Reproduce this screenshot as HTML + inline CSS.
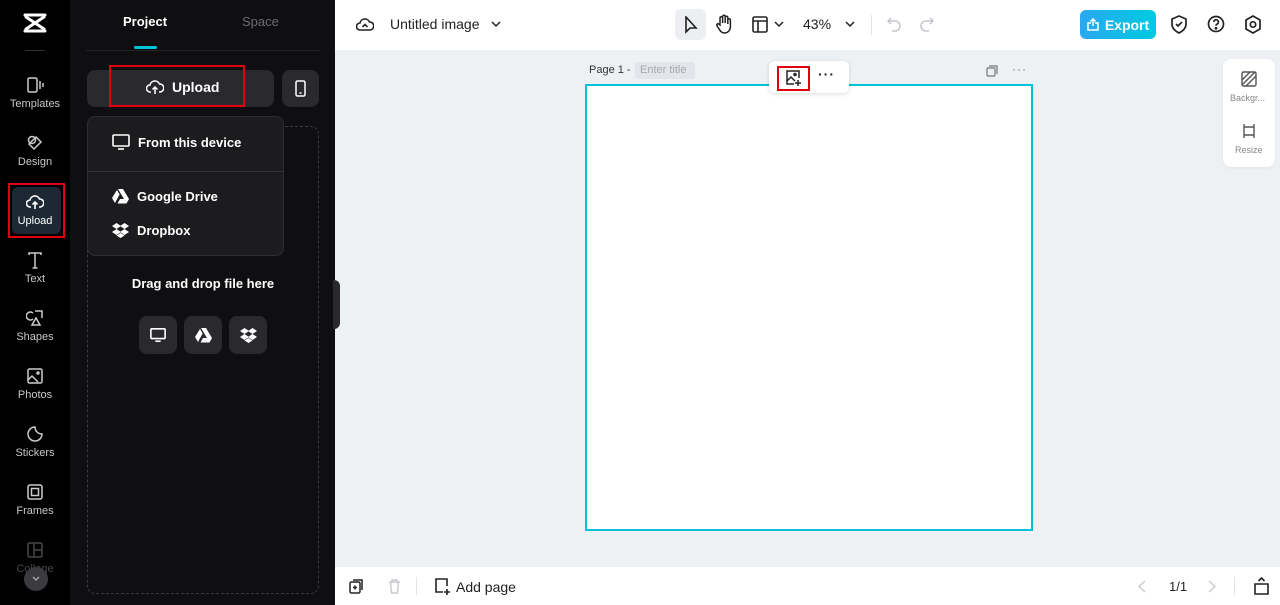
<!DOCTYPE html>
<html><head><style>
*{box-sizing:border-box;margin:0;padding:0}
body{width:1280px;height:605px;overflow:hidden;font-family:"Liberation Sans",sans-serif;background:#eef1f4;position:relative}
.a{position:absolute}
.rail{left:0;top:0;width:70px;height:605px;background:#000}
.ri{position:absolute;left:0;width:70px;text-align:center;color:#c8c8cc;font-size:11px}
.ri svg{display:block;margin:0 auto 4px}
.panel{left:70px;top:0;width:265px;height:605px;background:#0f0f11}
.btn{position:absolute;background:#2a2a2e;border-radius:8px}
.dd{color:#fff;font-weight:bold;font-size:13px}
.top{left:335px;top:0;width:945px;height:50px;background:#fff}
.bot{left:335px;top:567px;width:945px;height:38px;background:#fff}
</style></head><body>
<div class="a rail">
 <svg class="a" style="left:22px;top:12px" width="26" height="22" viewBox="0 0 26 22" fill="none" stroke="#fff" stroke-width="3" stroke-linecap="round"><path d="M3 3h20M3 19h20M4 5l18 12M22 5L4 17"/></svg>
 <div class="a" style="left:25px;top:50px;width:20px;height:1px;background:#333"></div>
 <div class="ri" style="top:76px"><svg width="18" height="18" viewBox="0 0 18 18" fill="none" stroke="#ccc" stroke-width="1.5"><rect x="2" y="2" width="9" height="14" rx="1.5"/><path d="M14 5v8M17 7v4"/></svg>Templates</div>
 <div class="ri" style="top:134px"><svg width="18" height="18" viewBox="0 0 18 18" fill="none" stroke="#ccc" stroke-width="1.5"><circle cx="6" cy="6" r="3.5"/><path d="M10 3l5 5-7 7-5-5z"/></svg>Design</div>
 <div class="a" style="left:8px;top:183px;width:57px;height:55px;border:2px solid #e0000f;"><div style="margin:2px;height:47px;background:#1c2833;border-radius:6px"></div></div>
 <div class="ri" style="top:193px;color:#fff"><svg width="18" height="18" viewBox="0 0 18 18" fill="none" stroke="#fff" stroke-width="1.6"><path d="M5 14H4a3.5 3.5 0 0 1 0-7 5 5 0 0 1 9.5-1A4 4 0 0 1 14 14h-1M9 16V9M6.5 11.5L9 9l2.5 2.5"/></svg>Upload</div>
 <div class="ri" style="top:251px"><svg width="18" height="18" viewBox="0 0 18 18" fill="none" stroke="#ccc" stroke-width="1.5"><path d="M3 4V2h12v2M9 2v15M6.5 17h5"/></svg>Text</div>
 <div class="ri" style="top:309px"><svg width="18" height="18" viewBox="0 0 18 18" fill="none" stroke="#ccc" stroke-width="1.5"><path d="M7 4a4 4 0 1 0 0 6M9 2h7v7M10 9l-4 7h8z"/></svg>Shapes</div>
 <div class="ri" style="top:367px"><svg width="18" height="18" viewBox="0 0 18 18" fill="none" stroke="#ccc" stroke-width="1.5"><rect x="2" y="2" width="14" height="14" rx="1.5"/><path d="M2 13l4-4 6 6"/><circle cx="12" cy="6" r="1"/></svg>Photos</div>
 <div class="ri" style="top:425px"><svg width="18" height="18" viewBox="0 0 18 18" fill="none" stroke="#ccc" stroke-width="1.5"><path d="M16 9A7 7 0 1 1 9 2c0 4 3 7 7 7z"/></svg>Stickers</div>
 <div class="ri" style="top:483px"><svg width="18" height="18" viewBox="0 0 18 18" fill="none" stroke="#ccc" stroke-width="1.5"><rect x="2" y="2" width="14" height="14" rx="2"/><rect x="5.5" y="5.5" width="7" height="7"/></svg>Frames</div>
 <div class="ri" style="top:541px;opacity:.35"><svg width="18" height="18" viewBox="0 0 18 18" fill="none" stroke="#ccc" stroke-width="1.5"><rect x="2" y="2" width="14" height="14" rx="1.5"/><path d="M8 2v14M8 9h8"/></svg>Collage</div>
 <div class="a" style="left:24px;top:567px;width:24px;height:24px;border-radius:50%;background:#3a3a3f"><svg style="margin:8px 7px" width="10" height="8" viewBox="0 0 10 8"><path d="M2 2l3 3 3-3" fill="none" stroke="#aaa" stroke-width="1.3"/></svg></div>
</div>
<div class="a panel">
 <div class="a" style="left:53px;top:14px;color:#fff;font-weight:bold;font-size:13px">Project</div>
 <div class="a" style="left:172px;top:14px;color:#6b6b70;font-size:13px">Space</div>
 <div class="a" style="left:64px;top:46px;width:23px;height:3px;background:#00c2d8;border-radius:2px"></div>
 <div class="a" style="left:16px;top:50px;width:234px;height:1px;background:#222"></div>
 <div class="btn" style="left:17px;top:70px;width:187px;height:37px"></div>
 <div class="a" style="left:39px;top:65px;width:136px;height:42px;border:2px solid #e0000f"></div>
 <div class="a" style="left:76px;top:79px;color:#fff;font-weight:bold;font-size:14px;display:flex;align-items:center;gap:8px"><svg width="18" height="16" viewBox="0 0 18 16" fill="none" stroke="#fff" stroke-width="1.5"><path d="M5 13H4a3.5 3.5 0 0 1 0-7 5 5 0 0 1 9.5-1A4 4 0 0 1 14 13h-1M9 15V8M6.5 10.5L9 8l2.5 2.5"/></svg>Upload</div>
 <div class="btn" style="left:212px;top:70px;width:37px;height:37px"><svg style="margin:10px 13px" width="11" height="17" viewBox="0 0 11 17" fill="none" stroke="#fff" stroke-width="1.5"><rect x="1" y="1" width="9" height="15" rx="1.5"/><path d="M4.5 13h2"/></svg></div>
 <div class="a" style="left:17px;top:126px;width:232px;height:468px;border:1px dashed #3a3a3e;border-radius:8px"></div>
 <div class="a" style="left:17px;top:116px;width:197px;height:140px;background:#1c1c1f;border:1px solid #2e2e32;border-radius:8px">
  <div class="a dd" style="left:24px;top:17px;display:flex;gap:8px;align-items:center"><svg width="18" height="16" viewBox="0 0 18 16" fill="none" stroke="#fff" stroke-width="1.6"><rect x="1" y="1" width="16" height="11" rx="1"/><path d="M6 15h6"/></svg>From this device</div>
  <div class="a" style="left:0;top:54px;width:195px;height:1px;background:#333"></div>
  <div class="a dd" style="left:24px;top:72px;display:flex;gap:8px;align-items:center"><svg width="17" height="15" viewBox="0 0 17 15" fill="#fff"><path d="M6 0h5l6 10h-5zM5 1l2.6 4.5L3 14 0 9zM8 10h9l-2.5 4.5H5.5z"/></svg>Google Drive</div>
  <div class="a dd" style="left:24px;top:106px;display:flex;gap:8px;align-items:center"><svg width="17" height="15" viewBox="0 0 17 15" fill="#fff"><path d="M4.5 0L0 3l4.5 3L9 3zM12.5 0L8 3l4.5 3L17 3zM4.5 6L0 9l4.5 3L9 9zM12.5 6L8 9l4.5 3L17 9zM8.5 10l-4 2.5 4 2.5 4-2.5z"/></svg>Dropbox</div>
 </div>
 <div class="a" style="left:17px;top:276px;width:232px;text-align:center;color:#fff;font-weight:bold;font-size:13px">Drag and drop file here</div>
 <div class="btn" style="left:69px;top:316px;width:38px;height:38px"><svg style="margin:11px" width="16" height="16" viewBox="0 0 18 16" fill="none" stroke="#fff" stroke-width="1.8"><rect x="1" y="1" width="16" height="11" rx="1"/><path d="M6 15h6"/></svg></div>
 <div class="btn" style="left:114px;top:316px;width:38px;height:38px"><svg style="margin:12px 11px" width="17" height="15" viewBox="0 0 17 15" fill="#fff"><path d="M6 0h5l6 10h-5zM5 1l2.6 4.5L3 14 0 9zM8 10h9l-2.5 4.5H5.5z"/></svg></div>
 <div class="btn" style="left:159px;top:316px;width:38px;height:38px"><svg style="margin:12px 11px" width="17" height="15" viewBox="0 0 17 15" fill="#fff"><path d="M4.5 0L0 3l4.5 3L9 3zM12.5 0L8 3l4.5 3L17 3zM4.5 6L0 9l4.5 3L9 9zM12.5 6L8 9l4.5 3L17 9zM8.5 10l-4 2.5 4 2.5 4-2.5z"/></svg></div>
 <div class="a" style="left:263px;top:280px;width:7px;height:49px;background:#2a2a2e;border-radius:0 6px 6px 0"></div>
</div>
<div class="a top">
 <svg class="a" style="left:21px;top:16px" width="18" height="16" viewBox="0 0 18 16" fill="none" stroke="#222" stroke-width="1.6"><path d="M5 14H4a3.5 3.5 0 0 1 0-7 5 5 0 0 1 9.5-1A4 4 0 0 1 14 14H5M6.5 11L9 8.5l2.5 2.5"/></svg>
 <div class="a" style="left:55px;top:16px;font-size:14px;color:#222">Untitled image</div>
 <svg class="a" style="left:156px;top:20px" width="10" height="8"><path d="M1 2l4 4 4-4" fill="none" stroke="#222" stroke-width="1.5"/></svg>
 <div class="a" style="left:340px;top:9px;width:31px;height:31px;background:#eceef1;border-radius:6px"><svg style="margin:7px 9px" width="14" height="18" viewBox="0 0 14 18" fill="none" stroke="#222" stroke-width="1.6"><path d="M2 1v15l4-4 6 0z"/></svg></div>
 <svg class="a" style="left:380px;top:14px" width="18" height="20" viewBox="0 0 18 20" fill="none" stroke="#222" stroke-width="1.5"><path d="M5 11V4a1.3 1.3 0 0 1 2.6 0v5V2.5a1.3 1.3 0 0 1 2.6 0V9V3.5a1.3 1.3 0 0 1 2.6 0V10V6a1.3 1.3 0 0 1 2.6 0v7a6 6 0 0 1-6 6c-3 0-4-2-6-5l-1.5-2.5a1.2 1.2 0 0 1 2-1.3z"/></svg>
 <svg class="a" style="left:417px;top:16px" width="16" height="17" viewBox="0 0 16 17" fill="none" stroke="#222" stroke-width="1.6"><rect x="1" y="1" width="14" height="15" rx="1.5"/><path d="M1 5h14M6 5v11"/></svg>
 <svg class="a" style="left:439px;top:20px" width="10" height="8"><path d="M1 2l4 4 4-4" fill="none" stroke="#222" stroke-width="1.5"/></svg>
 <div class="a" style="left:468px;top:16px;font-size:14px;color:#222">43%</div>
 <svg class="a" style="left:510px;top:20px" width="10" height="8"><path d="M1 2l4 4 4-4" fill="none" stroke="#222" stroke-width="1.5"/></svg>
 <div class="a" style="left:536px;top:15px;width:1px;height:20px;background:#e2e4e8"></div>
 <svg class="a" style="left:551px;top:16px" width="16" height="16" viewBox="0 0 16 16" fill="none" stroke="#c4c7cc" stroke-width="1.5"><path d="M5 2L2 5l3 3M2 5h7a5 5 0 0 1 0 10H6"/></svg>
 <svg class="a" style="left:584px;top:16px" width="16" height="16" viewBox="0 0 16 16" fill="none" stroke="#c4c7cc" stroke-width="1.5"><path d="M11 2l3 3-3 3M14 5H7a5 5 0 0 0 0 10h3"/></svg>
 <div class="a" style="left:745px;top:10px;width:76px;height:29px;border-radius:6px;background:linear-gradient(90deg,#2aa8f0,#00cbe0);color:#fff;font-weight:bold;font-size:14px;display:flex;align-items:center;justify-content:center;gap:6px"><svg width="12" height="13" viewBox="0 0 12 13" fill="none" stroke="#fff" stroke-width="1.5"><path d="M4 5H1v7h10V5H8M6 8V1M3.5 3.5L6 1l2.5 2.5"/></svg>Export</div>
 <svg class="a" style="left:835px;top:15px" width="18" height="19" viewBox="0 0 18 19" fill="none" stroke="#222" stroke-width="1.7"><path d="M9 1l7 3v5c0 4-3 7-7 9-4-2-7-5-7-9V4z"/><path d="M6 9l2 2 4-4"/></svg>
 <svg class="a" style="left:872px;top:15px" width="18" height="18" viewBox="0 0 18 18" fill="none" stroke="#222" stroke-width="1.7"><circle cx="9" cy="9" r="7.5"/><path d="M6.8 7a2.3 2.3 0 1 1 3 2.2c-.6.3-.8.8-.8 1.5"/><circle cx="9" cy="13.3" r=".6" fill="#222"/></svg>
 <svg class="a" style="left:909px;top:15px" width="18" height="19" viewBox="0 0 18 19" fill="none" stroke="#222" stroke-width="1.7"><path d="M9 1l7 4v9l-7 4-7-4V5z"/><circle cx="9" cy="9.5" r="2.7"/></svg>
</div>
<div class="a" style="left:589px;top:64px;font-size:11px;color:#333">Page 1 -</div>
<div class="a" style="left:635px;top:62px;width:60px;height:17px;background:#e2e5e9;border-radius:3px;font-size:11px;color:#a5a9b0;padding:2px 5px">Enter title</div>
<svg class="a" style="left:986px;top:65px" width="12" height="12" viewBox="0 0 12 12" fill="none" stroke="#777" stroke-width="1.2"><rect x="1" y="3" width="8" height="8" rx="1"/><path d="M3 1h8v8"/></svg>
<div class="a" style="left:1012px;top:62px;font-size:12px;color:#777;letter-spacing:1px">···</div>
<div class="a" style="left:585px;top:84px;width:448px;height:447px;background:#fff;border:2px solid #00c2d8"></div>
<div class="a" style="left:769px;top:61px;width:80px;height:32px;background:#fff;border-radius:6px;box-shadow:0 1px 4px rgba(0,0,0,.15)"></div>
<div class="a" style="left:777px;top:66px;width:33px;height:25px;border:2px solid #e0000f"></div>
<svg class="a" style="left:785px;top:69px" width="17" height="18" viewBox="0 0 17 18" fill="none" stroke="#222" stroke-width="1.5"><path d="M14 9V2H2v13h7"/><path d="M2 12l4-4 4 4"/><circle cx="10" cy="5.5" r="1" fill="#222"/><path d="M13 11v6M10 14h6"/></svg>
<div class="a" style="left:818px;top:66px;font-size:14px;color:#222;font-weight:bold;letter-spacing:1px">···</div>
<div class="a" style="left:1223px;top:59px;width:52px;height:108px;background:#fff;border-radius:8px;box-shadow:0 1px 3px rgba(0,0,0,.06)">
 <svg class="a" style="left:18px;top:12px" width="16" height="16" viewBox="0 0 16 16" fill="none" stroke="#555" stroke-width="1.4"><rect x="1" y="1" width="14" height="14" rx="1.5"/><path d="M1 9l8-8M5 15L15 5M1 14L14 1"/></svg>
 <div class="a" style="left:7px;top:34px;font-size:9px;color:#888">Backgr...</div>
 <svg class="a" style="left:18px;top:64px" width="16" height="16" viewBox="0 0 16 16" fill="none" stroke="#555" stroke-width="1.4"><path d="M3 1v3M13 1v3M3 12v3M13 12v3M3 4h10v8H3z"/></svg>
 <div class="a" style="left:12px;top:86px;font-size:9px;color:#888">Resize</div>
</div>
<div class="a bot">
 <svg class="a" style="left:14px;top:12px" width="15" height="15" viewBox="0 0 15 15" fill="none" stroke="#222" stroke-width="1.5"><rect x="1" y="3" width="10" height="11" rx="1.5"/><path d="M4 1h9v10M6 6.5v4M4 8.5h4"/></svg>
 <svg class="a" style="left:53px;top:12px" width="13" height="15" viewBox="0 0 13 15" fill="none" stroke="#c6c9ce" stroke-width="1.4"><path d="M1 3h11M4 3V1h5v2M2.5 3l1 11h6l1-11"/></svg>
 <div class="a" style="left:81px;top:10px;width:1px;height:18px;background:#e2e4e8"></div>
 <svg class="a" style="left:99px;top:11px" width="18" height="18" viewBox="0 0 18 18" fill="none" stroke="#222" stroke-width="1.6"><path d="M9 14H2V1h11v7M13 11v6M10 14h6"/></svg>
 <div class="a" style="left:121px;top:12px;font-size:14px;color:#222">Add page</div>
 <svg class="a" style="left:803px;top:13px" width="8" height="13"><path d="M7 1L1 6.5 7 12" fill="none" stroke="#c4c7cc" stroke-width="1.3"/></svg>
 <div class="a" style="left:834px;top:12px;font-size:13px;color:#222">1/1</div>
 <svg class="a" style="left:873px;top:13px" width="8" height="13"><path d="M1 1l6 5.5L1 12" fill="none" stroke="#c4c7cc" stroke-width="1.3"/></svg>
 <div class="a" style="left:899px;top:10px;width:1px;height:18px;background:#e2e4e8"></div>
 <svg class="a" style="left:919px;top:10px" width="15" height="18" viewBox="0 0 15 18" fill="none" stroke="#222" stroke-width="1.6"><path d="M1 7h13v10H1zM4.5 4L7.5 1l3 3"/></svg>
</div>
</body></html>
